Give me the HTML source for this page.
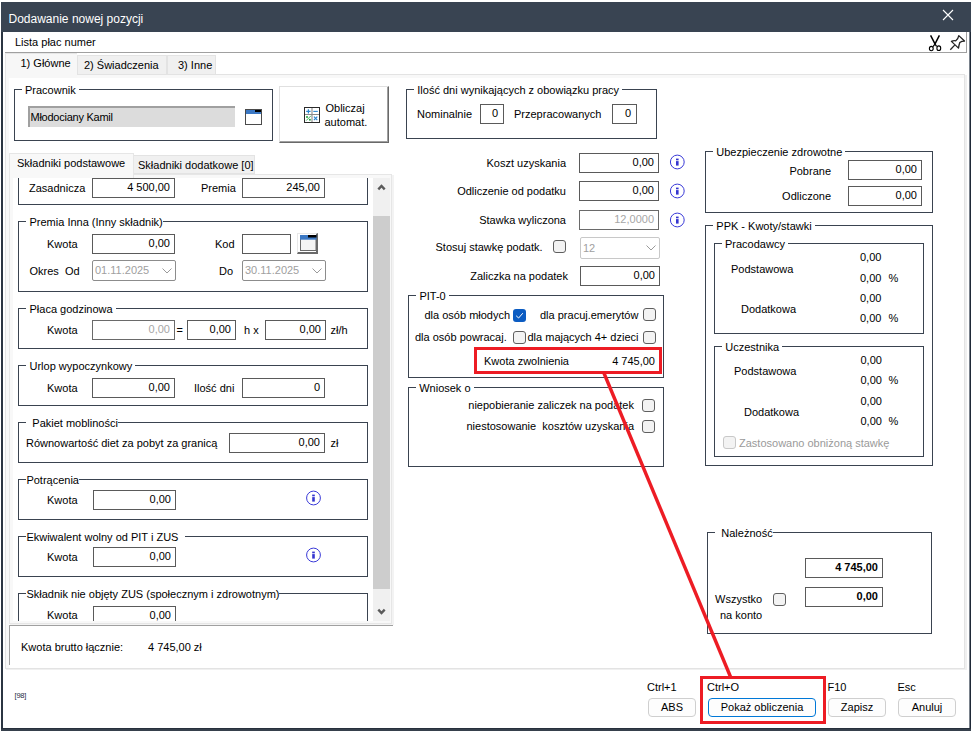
<!DOCTYPE html>
<html><head><meta charset="utf-8"><style>
html,body{margin:0;padding:0;background:#fff;}
body{width:971px;height:731px;overflow:hidden;position:relative;font-family:"Liberation Sans", sans-serif;font-size:11px;color:#000;}
body div{position:absolute;}
</style></head><body>
<div style="left:0px;top:0px;width:971px;height:731px;background:#fff;"></div>
<div style="left:1px;top:2px;width:970px;height:30px;background:#394452;"></div>
<div style="left:1px;top:32px;width:2px;height:699px;background:#2b3542;"></div>
<div style="left:969px;top:32px;width:1px;height:696px;background:#7a828c;"></div>
<div style="left:970px;top:32px;width:1px;height:699px;background:#1f2937;"></div>
<div style="left:1px;top:728px;width:970px;height:3px;background:#36404c;"></div>
<div style="left:1px;top:728px;width:970px;height:1px;background:#27303c;"></div>
<div style="left:8.5px;top:11.84px;font-size:12px;line-height:14px;color:#fff;white-space:pre;">Dodawanie nowej pozycji</div>
<svg style="position:absolute;left:942px;top:9px" width="12" height="12"><path d="M1 1 L11 11 M11 1 L1 11" stroke="#fff" stroke-width="1.1"/></svg>
<div style="left:15px;top:35.69px;font-size:11px;line-height:13px;color:#000;white-space:pre;">Lista płac numer</div>
<div style="left:5px;top:52px;width:962px;height:1px;background:#a0a0a0;"></div>
<div style="left:966px;top:32px;width:1px;height:21px;background:#a0a0a0;"></div>
<svg style="position:absolute;left:925px;top:32px" width="20" height="20"><path d="M5.6 3.4 L10.1 12.2 M14.4 3.4 L9.9 12.2" stroke="#000" stroke-width="1.5" fill="none"/><path d="M10 12.2 L8 14.6 M10 12.2 L11.6 14.4" stroke="#000" stroke-width="1.3"/><ellipse cx="6.3" cy="16.6" rx="1.9" ry="2.2" stroke="#000" stroke-width="1.1" fill="none"/><ellipse cx="13.8" cy="16.2" rx="1.9" ry="2.3" stroke="#000" stroke-width="1.1" fill="none"/></svg>
<svg style="position:absolute;left:947px;top:32px" width="20" height="20"><path d="M3.3 17.8 L7.7 13.1" stroke="#222" stroke-width="1.3"/><path d="M4.4 9.4 C6 8.6 7.6 8.6 8.8 8.8 C10.5 7.6 11.4 5.6 11.8 3.6 L17.5 9 C15.6 9 14.2 9.4 12.8 10.6 C12.2 12.2 11.8 14.2 11.5 16.1 Z" stroke="#222" stroke-width="1.3" fill="#fff" stroke-linejoin="round"/></svg>
<div style="left:5px;top:74px;width:960px;height:595px;background:#f8f8f8;border:1px solid #e3e3e3;box-sizing:border-box;"></div>
<div style="left:965px;top:75px;width:2px;height:595px;background:#f0f0f0;"></div>
<div style="left:6px;top:669px;width:961px;height:1px;background:#f0f0f0;"></div>
<div style="left:9px;top:78px;width:955px;height:590px;background:#fff;"></div>
<div style="left:77px;top:55px;width:90px;height:20px;background:#f0f0f0;border:1px solid #e3e3e3;box-sizing:border-box;"></div>
<div style="left:167px;top:55px;width:49px;height:20px;background:#f0f0f0;border:1px solid #e3e3e3;box-sizing:border-box;"></div>
<div style="left:5px;top:53px;width:72px;height:25px;background:#f7f7f7;border:1px solid #e6e6e6;border-bottom:none;border-right:none;box-sizing:border-box;"></div>
<div style="left:20.5px;top:56.69px;font-size:11px;line-height:13px;color:#000;white-space:pre;">1) Główne</div>
<div style="left:84px;top:58.69px;font-size:11px;line-height:13px;color:#000;white-space:pre;">2) Świadczenia</div>
<div style="left:178px;top:58.69px;font-size:11px;line-height:13px;color:#000;white-space:pre;">3) Inne</div>
<div style="left:14px;top:89px;width:259px;height:52px;border:1px solid #3a4350;box-sizing:border-box;"></div>
<div style="left:22px;top:83px;height:12px;padding:0 3px 0 3px;background:#fff;font-size:11px;line-height:13px;white-space:pre;color:transparent">Pracownik</div>
<div style="left:25px;top:83.69px;font-size:11px;line-height:13px;color:#000;white-space:pre;">Pracownik</div>
<div style="left:28px;top:106px;width:207px;height:21px;background:#dcdcdc;border-top:2px solid #a0a0a0;border-left:2px solid #a0a0a0;box-sizing:border-box;"></div>
<div style="left:30.5px;top:110.69px;font-size:11px;line-height:13px;color:#000;white-space:pre;letter-spacing:-0.25px;">Młodociany Kamil</div>
<svg style="position:absolute;left:245px;top:109px" width="17" height="16"><rect x="0.5" y="0.5" width="16" height="15" fill="#fff" stroke="#4a4a4a" stroke-width="1"/><rect x="1" y="1" width="15" height="4" fill="#3b78c4"/><rect x="10" y="1" width="6" height="2" fill="#000"/></svg>
<div style="left:279px;top:86px;width:110px;height:57px;background:#fff;border:1px solid #e0e0e0;border-right:1px solid #696969;border-bottom:1px solid #696969;box-shadow:inset -1px -1px 0 #a0a0a0;box-sizing:border-box;"></div>
<svg style="position:absolute;left:304px;top:107px" width="16" height="16"><rect x="0.5" y="0.5" width="15" height="15" fill="#fff" stroke="#2a2a2a" stroke-width="1"/><path d="M8 1 V15 M1 7.5 H15" stroke="#8a8a8a" stroke-width="1.1"/><path d="M2.2 4.4 H6.6 M4.4 2.2 V6.6" stroke="#2a86d0" stroke-width="1.2"/><path d="M9.3 4.4 H13.8" stroke="#2a86d0" stroke-width="1.1"/><circle cx="3" cy="9.9" r="1" fill="#1ea03c"/><circle cx="5.9" cy="12.7" r="1" fill="#1ea03c"/><path d="M2.2 13.6 L6.9 8.8" stroke="#1ea03c" stroke-width="0.8"/><path d="M9.9 9.7 L13.3 13.1 M13.3 9.7 L9.9 13.1" stroke="#2a86d0" stroke-width="1.2"/></svg>
<div style="left:325.5px;top:102.19px;font-size:11px;line-height:13px;color:#000;white-space:pre;">Obliczaj</div>
<div style="left:324.5px;top:115.69px;font-size:11px;line-height:13px;color:#000;white-space:pre;">automat.</div>
<div style="left:9px;top:174px;width:383px;height:450px;background:#f8f8f8;border:1px solid #e6e6e6;box-sizing:border-box;"></div>
<div style="left:392px;top:175px;width:2px;height:450px;background:#f3f3f3;"></div>
<div style="left:10px;top:624px;width:384px;height:1px;background:#f3f3f3;"></div>
<div style="left:133px;top:155px;width:122px;height:19px;background:#f0f0f0;border:1px solid #e3e3e3;box-sizing:border-box;"></div>
<div style="left:9px;top:153px;width:125px;height:25px;background:#f8f8f8;border:1px solid #e6e6e6;border-bottom:none;box-sizing:border-box;"></div>
<div style="left:17px;top:156.69px;font-size:11px;line-height:13px;color:#000;white-space:pre;">Składniki podstawowe</div>
<div style="left:138px;top:158.69px;font-size:11px;line-height:13px;color:#000;white-space:pre;">Składniki dodatkowe [0]</div>
<div style="left:13px;top:178px;width:360px;height:443px;background:#fff;overflow:hidden">
<div style="left:-13px;top:-178px;width:971px;height:731px;">
<div style="left:18px;top:160px;width:350px;height:45px;border:1px solid #3a4350;box-sizing:border-box;"></div>
<div style="left:29px;top:181.69px;font-size:11px;line-height:13px;color:#000;white-space:pre;">Zasadnicza</div>
<div style="left:92px;top:178px;width:83px;height:20px;border:1px solid #5a5a5a;box-sizing:border-box;background:#fff;"></div>
<div style="left:-130px;top:181.19px;width:300px;text-align:right;font-size:11px;line-height:13px;color:#000;white-space:pre;">4 500,00</div>
<div style="left:201px;top:181.69px;font-size:11px;line-height:13px;color:#000;white-space:pre;">Premia</div>
<div style="left:242px;top:178px;width:83px;height:20px;border:1px solid #5a5a5a;box-sizing:border-box;background:#fff;"></div>
<div style="left:20px;top:181.19px;width:300px;text-align:right;font-size:11px;line-height:13px;color:#000;white-space:pre;">245,00</div>
<div style="left:18px;top:221px;width:350px;height:71px;border:1px solid #3a4350;box-sizing:border-box;"></div>
<div style="left:25.9px;top:215px;height:12px;padding:0 0px 0 3.6px;background:#fff;font-size:11px;line-height:13px;white-space:pre;color:transparent">Premia Inna (Inny składnik)</div>
<div style="left:29.5px;top:215.69px;font-size:11px;line-height:13px;color:#000;white-space:pre;">Premia Inna (Inny składnik)</div>
<div style="left:47px;top:237.69px;font-size:11px;line-height:13px;color:#000;white-space:pre;">Kwota</div>
<div style="left:92px;top:234px;width:83px;height:20px;border:1px solid #5a5a5a;box-sizing:border-box;background:#fff;"></div>
<div style="left:-130px;top:237.19px;width:300px;text-align:right;font-size:11px;line-height:13px;color:#000;white-space:pre;">0,00</div>
<div style="left:215px;top:237.69px;font-size:11px;line-height:13px;color:#000;white-space:pre;">Kod</div>
<div style="left:242px;top:234px;width:49px;height:20px;border:1px solid #5a5a5a;box-sizing:border-box;background:#fff;"></div>
<div style="left:297px;top:233px;width:21px;height:21px;background:#fff;border:1px solid #e8e8e8;border-right:2px solid #6a6a6a;border-bottom:2px solid #6a6a6a;box-sizing:border-box;"></div>
<svg style="position:absolute;left:300px;top:235px" width="17" height="16"><rect x="0.5" y="0.5" width="15.5" height="15" fill="#f4f4f4" stroke="#6a6a6a" stroke-width="1"/><rect x="0" y="0" width="16.5" height="4.7" fill="#3b78c4"/><rect x="8" y="0" width="8.5" height="2.5" fill="#000"/></svg>
<div style="left:29.5px;top:264.69px;font-size:11px;line-height:13px;color:#000;white-space:pre;">Okres  Od</div>
<div style="left:92px;top:260px;width:84px;height:21px;border:1px solid #8c8c8c;border-radius:2px;box-sizing:border-box;background:#fff;"></div>
<div style="left:95px;top:264.19px;font-size:11px;line-height:13px;color:#a0a0a0;white-space:pre;">01.11.2025</div>
<svg style="position:absolute;left:162px;top:267.5px" width="10" height="6"><path d="M0.5 0.5 L5 5 L9.5 0.5" stroke="#9a9a9a" stroke-width="1" fill="none"/></svg>
<div style="left:219px;top:264.69px;font-size:11px;line-height:13px;color:#000;white-space:pre;">Do</div>
<div style="left:242px;top:260px;width:84px;height:21px;border:1px solid #8c8c8c;border-radius:2px;box-sizing:border-box;background:#fff;"></div>
<div style="left:245px;top:264.19px;font-size:11px;line-height:13px;color:#a0a0a0;white-space:pre;">30.11.2025</div>
<svg style="position:absolute;left:312px;top:267.5px" width="10" height="6"><path d="M0.5 0.5 L5 5 L9.5 0.5" stroke="#9a9a9a" stroke-width="1" fill="none"/></svg>
<div style="left:18px;top:308px;width:350px;height:41px;border:1px solid #3a4350;box-sizing:border-box;"></div>
<div style="left:25.9px;top:302px;height:12px;padding:0 3px 0 3.6px;background:#fff;font-size:11px;line-height:13px;white-space:pre;color:transparent">Płaca godzinowa</div>
<div style="left:29.5px;top:302.69px;font-size:11px;line-height:13px;color:#000;white-space:pre;">Płaca godzinowa</div>
<div style="left:47px;top:323.69px;font-size:11px;line-height:13px;color:#000;white-space:pre;">Kwota</div>
<div style="left:92px;top:320px;width:83px;height:20px;border:1px solid #6a6a6a;box-sizing:border-box;background:#fff;"></div>
<div style="left:-130px;top:323.19px;width:300px;text-align:right;font-size:11px;line-height:13px;color:#a6a6a6;white-space:pre;">0,00</div>
<div style="left:176.5px;top:323.69px;font-size:11px;line-height:13px;color:#000;white-space:pre;">=</div>
<div style="left:187px;top:320px;width:49px;height:20px;border:1px solid #5a5a5a;box-sizing:border-box;background:#fff;"></div>
<div style="left:-69px;top:323.19px;width:300px;text-align:right;font-size:11px;line-height:13px;color:#000;white-space:pre;">0,00</div>
<div style="left:244px;top:323.69px;font-size:11px;line-height:13px;color:#000;white-space:pre;">h x</div>
<div style="left:265px;top:320px;width:61px;height:20px;border:1px solid #5a5a5a;box-sizing:border-box;background:#fff;"></div>
<div style="left:21px;top:323.19px;width:300px;text-align:right;font-size:11px;line-height:13px;color:#000;white-space:pre;">0,00</div>
<div style="left:330.5px;top:323.69px;font-size:11px;line-height:13px;color:#000;white-space:pre;">zł/h</div>
<div style="left:18px;top:365px;width:350px;height:41px;border:1px solid #3a4350;box-sizing:border-box;"></div>
<div style="left:25.9px;top:359px;height:12px;padding:0 3px 0 3.6px;background:#fff;font-size:11px;line-height:13px;white-space:pre;color:transparent">Urlop wypoczynkowy</div>
<div style="left:29.5px;top:359.69px;font-size:11px;line-height:13px;color:#000;white-space:pre;">Urlop wypoczynkowy</div>
<div style="left:47px;top:381.69px;font-size:11px;line-height:13px;color:#000;white-space:pre;">Kwota</div>
<div style="left:92px;top:378px;width:83px;height:20px;border:1px solid #5a5a5a;box-sizing:border-box;background:#fff;"></div>
<div style="left:-130px;top:381.19px;width:300px;text-align:right;font-size:11px;line-height:13px;color:#000;white-space:pre;">0,00</div>
<div style="left:194px;top:381.69px;font-size:11px;line-height:13px;color:#000;white-space:pre;">Ilość dni</div>
<div style="left:242px;top:378px;width:83px;height:20px;border:1px solid #5a5a5a;box-sizing:border-box;background:#fff;"></div>
<div style="left:20px;top:381.19px;width:300px;text-align:right;font-size:11px;line-height:13px;color:#000;white-space:pre;">0</div>
<div style="left:18px;top:422px;width:350px;height:41px;border:1px solid #3a4350;box-sizing:border-box;"></div>
<div style="left:26.299999999999997px;top:416px;height:12px;padding:0 0px 0 6px;background:#fff;font-size:11px;line-height:13px;white-space:pre;color:transparent">Pakiet mobliności</div>
<div style="left:32.3px;top:416.69px;font-size:11px;line-height:13px;color:#000;white-space:pre;">Pakiet mobliności</div>
<div style="left:26px;top:436.69px;font-size:11px;line-height:13px;color:#000;white-space:pre;">Równowartość diet za pobyt za granicą</div>
<div style="left:229px;top:433px;width:96px;height:20px;border:1px solid #5a5a5a;box-sizing:border-box;background:#fff;"></div>
<div style="left:20px;top:436.19px;width:300px;text-align:right;font-size:11px;line-height:13px;color:#000;white-space:pre;">0,00</div>
<div style="left:330.5px;top:436.69px;font-size:11px;line-height:13px;color:#000;white-space:pre;">zł</div>
<div style="left:18px;top:479px;width:350px;height:41px;border:1px solid #3a4350;box-sizing:border-box;"></div>
<div style="left:26.4px;top:473px;height:12px;padding:0 0px 0 0px;background:#fff;font-size:11px;line-height:13px;white-space:pre;color:transparent">Potrącenia</div>
<div style="left:26.4px;top:473.69px;font-size:11px;line-height:13px;color:#000;white-space:pre;">Potrącenia</div>
<div style="left:47px;top:493.69px;font-size:11px;line-height:13px;color:#000;white-space:pre;">Kwota</div>
<div style="left:93px;top:490px;width:83px;height:20px;border:1px solid #5a5a5a;box-sizing:border-box;background:#fff;"></div>
<div style="left:-129px;top:493.19px;width:300px;text-align:right;font-size:11px;line-height:13px;color:#000;white-space:pre;">0,00</div>
<svg style="position:absolute;left:305px;top:490px" width="17" height="17"><g transform="translate(0.50,0.00)"><circle cx="8" cy="8" r="6.9" stroke="#3a3ad8" stroke-width="1" fill="none"/><rect x="6.7" y="4.6" width="2.6" height="1.7" fill="#3535d0"/><rect x="6.7" y="7.1" width="2.6" height="4.5" fill="#3535d0"/></g></svg>
<div style="left:18px;top:536px;width:350px;height:41px;border:1px solid #3a4350;box-sizing:border-box;"></div>
<div style="left:26.4px;top:530px;height:12px;padding:0 7px 0 0px;background:#fff;font-size:11px;line-height:13px;white-space:pre;color:transparent">Ekwiwalent wolny od PIT i ZUS</div>
<div style="left:26.4px;top:530.69px;font-size:11px;line-height:13px;color:#000;white-space:pre;">Ekwiwalent wolny od PIT i ZUS</div>
<div style="left:47px;top:550.69px;font-size:11px;line-height:13px;color:#000;white-space:pre;">Kwota</div>
<div style="left:93px;top:547px;width:83px;height:20px;border:1px solid #5a5a5a;box-sizing:border-box;background:#fff;"></div>
<div style="left:-129px;top:550.19px;width:300px;text-align:right;font-size:11px;line-height:13px;color:#000;white-space:pre;">0,00</div>
<svg style="position:absolute;left:305px;top:547px" width="17" height="17"><g transform="translate(0.50,0.00)"><circle cx="8" cy="8" r="6.9" stroke="#3a3ad8" stroke-width="1" fill="none"/><rect x="6.7" y="4.6" width="2.6" height="1.7" fill="#3535d0"/><rect x="6.7" y="7.1" width="2.6" height="4.5" fill="#3535d0"/></g></svg>
<div style="left:18px;top:593px;width:350px;height:60px;border:1px solid #3a4350;box-sizing:border-box;"></div>
<div style="left:26.4px;top:587px;height:12px;padding:0 0px 0 0px;background:#fff;font-size:11px;line-height:13px;white-space:pre;color:transparent">Składnik nie objęty ZUS (społecznym i zdrowotnym)</div>
<div style="left:26.4px;top:587.69px;font-size:11px;line-height:13px;color:#000;white-space:pre;">Składnik nie objęty ZUS (społecznym i zdrowotnym)</div>
<div style="left:47px;top:608.69px;font-size:11px;line-height:13px;color:#000;white-space:pre;">Kwota</div>
<div style="left:93px;top:606px;width:83px;height:20px;border:1px solid #5a5a5a;box-sizing:border-box;background:#fff;"></div>
<div style="left:-129px;top:609.19px;width:300px;text-align:right;font-size:11px;line-height:13px;color:#000;white-space:pre;">0,00</div>
</div></div>
<div style="left:373px;top:178px;width:17px;height:443px;background:#f0f0f0;"></div>
<div style="left:373px;top:216px;width:17px;height:373px;background:#cdcdcd;"></div>
<svg style="position:absolute;left:377px;top:183px" width="10" height="8"><path d="M1.3 6.4 L4.5 3 L7.7 6.4" stroke="#5a5a5a" stroke-width="2.4" fill="none"/></svg>
<svg style="position:absolute;left:377px;top:608px" width="10" height="8"><path d="M1.3 1.6 L4.5 5 L7.7 1.6" stroke="#5a5a5a" stroke-width="2.4" fill="none"/></svg>
<div style="left:9px;top:625px;width:384px;height:1px;background:#a0a0a0;"></div>
<div style="left:9px;top:625px;width:1px;height:40px;background:#a0a0a0;"></div>
<div style="left:21px;top:640.69px;font-size:11px;line-height:13px;color:#000;white-space:pre;">Kwota brutto łącznie:</div>
<div style="left:148px;top:640.69px;font-size:11px;line-height:13px;color:#000;white-space:pre;">4 745,00 zł</div>
<div style="left:406px;top:89px;width:251px;height:50px;border:1px solid #3a4350;box-sizing:border-box;"></div>
<div style="left:414.3px;top:83px;height:12px;padding:0 3px 0 3px;background:#fff;font-size:11px;line-height:13px;white-space:pre;color:transparent">Ilość dni wynikających z obowiązku pracy</div>
<div style="left:417.3px;top:83.69px;font-size:11px;line-height:13px;color:#000;white-space:pre;">Ilość dni wynikających z obowiązku pracy</div>
<div style="left:417px;top:107.69px;font-size:11px;line-height:13px;color:#000;white-space:pre;">Nominalnie</div>
<div style="left:480px;top:104px;width:24px;height:20px;border:1px solid #5a5a5a;box-sizing:border-box;background:#fff;"></div>
<div style="left:198px;top:107.19px;width:300px;text-align:right;font-size:11px;line-height:13px;color:#000;white-space:pre;">0</div>
<div style="left:514px;top:107.69px;font-size:11px;line-height:13px;color:#000;white-space:pre;">Przepracowanych</div>
<div style="left:612px;top:104px;width:25px;height:20px;border:1px solid #5a5a5a;box-sizing:border-box;background:#fff;"></div>
<div style="left:331px;top:107.19px;width:300px;text-align:right;font-size:11px;line-height:13px;color:#000;white-space:pre;">0</div>
<div style="left:266px;top:156.69px;width:300px;text-align:right;font-size:11px;line-height:13px;color:#000;white-space:pre;">Koszt uzyskania</div>
<div style="left:579px;top:153px;width:80px;height:20px;border:1px solid #5a5a5a;box-sizing:border-box;background:#fff;"></div>
<div style="left:354px;top:156.19px;width:300px;text-align:right;font-size:11px;line-height:13px;color:#000;white-space:pre;">0,00</div>
<svg style="position:absolute;left:669px;top:154px" width="17" height="17"><g transform="translate(0.30,0.00)"><circle cx="8" cy="8" r="6.9" stroke="#3a3ad8" stroke-width="1" fill="none"/><rect x="6.7" y="4.6" width="2.6" height="1.7" fill="#3535d0"/><rect x="6.7" y="7.1" width="2.6" height="4.5" fill="#3535d0"/></g></svg>
<div style="left:266px;top:184.69px;width:300px;text-align:right;font-size:11px;line-height:13px;color:#000;white-space:pre;">Odliczenie od podatku</div>
<div style="left:579px;top:181px;width:80px;height:20px;border:1px solid #5a5a5a;box-sizing:border-box;background:#fff;"></div>
<div style="left:354px;top:184.19px;width:300px;text-align:right;font-size:11px;line-height:13px;color:#000;white-space:pre;">0,00</div>
<svg style="position:absolute;left:669px;top:183px" width="17" height="17"><g transform="translate(0.30,0.00)"><circle cx="8" cy="8" r="6.9" stroke="#3a3ad8" stroke-width="1" fill="none"/><rect x="6.7" y="4.6" width="2.6" height="1.7" fill="#3535d0"/><rect x="6.7" y="7.1" width="2.6" height="4.5" fill="#3535d0"/></g></svg>
<div style="left:266px;top:213.69px;width:300px;text-align:right;font-size:11px;line-height:13px;color:#000;white-space:pre;">Stawka wyliczona</div>
<div style="left:579px;top:210px;width:80px;height:20px;border:1px solid #6a6a6a;box-sizing:border-box;background:#fff;"></div>
<div style="left:354px;top:213.19px;width:300px;text-align:right;font-size:11px;line-height:13px;color:#a6a6a6;white-space:pre;">12,0000</div>
<svg style="position:absolute;left:669px;top:212px" width="17" height="17"><g transform="translate(0.30,0.00)"><circle cx="8" cy="8" r="6.9" stroke="#3a3ad8" stroke-width="1" fill="none"/><rect x="6.7" y="4.6" width="2.6" height="1.7" fill="#3535d0"/><rect x="6.7" y="7.1" width="2.6" height="4.5" fill="#3535d0"/></g></svg>
<div style="left:435.5px;top:240.69px;font-size:11px;line-height:13px;color:#000;white-space:pre;">Stosuj stawkę podatk.</div>
<div style="left:553px;top:240px;width:13px;height:13px;box-sizing:border-box;border:1px solid #5f5f5f;border-radius:3px;background:#f3f3f3;"></div>
<div style="left:580px;top:237px;width:80px;height:22px;border:1px solid #c8c8c8;border-radius:2px;box-sizing:border-box;background:#fff;"></div>
<div style="left:583px;top:242.19px;font-size:11px;line-height:13px;color:#a0a0a0;white-space:pre;">12</div>
<svg style="position:absolute;left:646px;top:245.0px" width="10" height="6"><path d="M0.5 0.5 L5 5 L9.5 0.5" stroke="#9a9a9a" stroke-width="1" fill="none"/></svg>
<div style="left:268px;top:269.69px;width:300px;text-align:right;font-size:11px;line-height:13px;color:#000;white-space:pre;">Zaliczka na podatek</div>
<div style="left:580px;top:266px;width:80px;height:20px;border:1px solid #5a5a5a;box-sizing:border-box;background:#fff;"></div>
<div style="left:355px;top:269.19px;width:300px;text-align:right;font-size:11px;line-height:13px;color:#000;white-space:pre;">0,00</div>
<div style="left:408px;top:295px;width:256px;height:83px;border:1px solid #3a4350;box-sizing:border-box;"></div>
<div style="left:416.4px;top:289px;height:12px;padding:0 3px 0 3px;background:#fff;font-size:11px;line-height:13px;white-space:pre;color:transparent">PIT-0</div>
<div style="left:419.4px;top:289.69px;font-size:11px;line-height:13px;color:#000;white-space:pre;">PIT-0</div>
<div style="left:424.5px;top:308.69px;font-size:11px;line-height:13px;color:#000;white-space:pre;">dla osób młodych</div>
<div style="left:513px;top:309px;width:13px;height:13px;border-radius:3px;background:#0b5cc2;"></div>
<svg style="position:absolute;left:513px;top:309px" width="13" height="13"><path d="M3.2 6.8 L5.6 9 L9.8 4.2" stroke="#fff" stroke-width="1" fill="none"/></svg>
<div style="left:540px;top:308.69px;font-size:11px;line-height:13px;color:#000;white-space:pre;">dla pracuj.emerytów</div>
<div style="left:643px;top:308px;width:13px;height:13px;box-sizing:border-box;border:1px solid #5f5f5f;border-radius:3px;background:#f3f3f3;"></div>
<div style="left:415px;top:330.69px;font-size:11px;line-height:13px;color:#000;white-space:pre;">dla osób powracaj.</div>
<div style="left:513px;top:331px;width:13px;height:13px;box-sizing:border-box;border:1px solid #5f5f5f;border-radius:3px;background:#f3f3f3;"></div>
<div style="left:527.5px;top:330.69px;font-size:11px;line-height:13px;color:#000;white-space:pre;">dla mających 4+ dzieci</div>
<div style="left:643px;top:331px;width:13px;height:13px;box-sizing:border-box;border:1px solid #5f5f5f;border-radius:3px;background:#f3f3f3;"></div>
<div style="left:484px;top:354.69px;font-size:11px;line-height:13px;color:#000;white-space:pre;">Kwota zwolnienia</div>
<div style="left:355px;top:354.69px;width:300px;text-align:right;font-size:11px;line-height:13px;color:#000;white-space:pre;">4 745,00</div>
<div style="left:408px;top:387px;width:256px;height:80px;border:1px solid #3a4350;box-sizing:border-box;"></div>
<div style="left:416.2px;top:381px;height:12px;padding:0 3px 0 3px;background:#fff;font-size:11px;line-height:13px;white-space:pre;color:transparent">Wniosek o</div>
<div style="left:419.2px;top:381.69px;font-size:11px;line-height:13px;color:#000;white-space:pre;">Wniosek o</div>
<div style="left:334px;top:398.69px;width:300px;text-align:right;font-size:11px;line-height:13px;color:#000;white-space:pre;">niepobieranie zaliczek na podatek</div>
<div style="left:642px;top:399px;width:13px;height:13px;box-sizing:border-box;border:1px solid #5f5f5f;border-radius:3px;background:#f3f3f3;"></div>
<div style="left:334px;top:419.69px;width:300px;text-align:right;font-size:11px;line-height:13px;color:#000;white-space:pre;">niestosowanie  kosztów uzyskania</div>
<div style="left:642px;top:420px;width:13px;height:13px;box-sizing:border-box;border:1px solid #5f5f5f;border-radius:3px;background:#f3f3f3;"></div>
<div style="left:705px;top:151px;width:228px;height:62px;border:1px solid #3a4350;box-sizing:border-box;"></div>
<div style="left:713.3px;top:145px;height:12px;padding:0 3px 0 3px;background:#fff;font-size:11px;line-height:13px;white-space:pre;color:transparent">Ubezpieczenie zdrowotne</div>
<div style="left:716.3px;top:145.69px;font-size:11px;line-height:13px;color:#000;white-space:pre;">Ubezpieczenie zdrowotne</div>
<div style="left:531px;top:165.19px;width:300px;text-align:right;font-size:11px;line-height:13px;color:#000;white-space:pre;">Pobrane</div>
<div style="left:848px;top:160px;width:74px;height:20px;border:1px solid #5a5a5a;box-sizing:border-box;background:#fff;"></div>
<div style="left:617px;top:163.19px;width:300px;text-align:right;font-size:11px;line-height:13px;color:#000;white-space:pre;">0,00</div>
<div style="left:531px;top:190.19px;width:300px;text-align:right;font-size:11px;line-height:13px;color:#000;white-space:pre;">Odliczone</div>
<div style="left:848px;top:186px;width:74px;height:20px;border:1px solid #5a5a5a;box-sizing:border-box;background:#fff;"></div>
<div style="left:617px;top:189.19px;width:300px;text-align:right;font-size:11px;line-height:13px;color:#000;white-space:pre;">0,00</div>
<div style="left:705px;top:225px;width:228px;height:241px;border:1px solid #3a4350;box-sizing:border-box;"></div>
<div style="left:713.3px;top:219px;height:12px;padding:0 3px 0 3px;background:#fff;font-size:11px;line-height:13px;white-space:pre;color:transparent">PPK - Kwoty/stawki</div>
<div style="left:716.3px;top:219.69px;font-size:11px;line-height:13px;color:#000;white-space:pre;">PPK - Kwoty/stawki</div>
<div style="left:714px;top:243px;width:210px;height:91px;border:1px solid #3a4350;box-sizing:border-box;"></div>
<div style="left:722px;top:237px;height:12px;padding:0 3px 0 3px;background:#fff;font-size:11px;line-height:13px;white-space:pre;color:transparent">Pracodawcy</div>
<div style="left:725px;top:237.69px;font-size:11px;line-height:13px;color:#000;white-space:pre;">Pracodawcy</div>
<div style="left:731px;top:262.69px;font-size:11px;line-height:13px;color:#000;white-space:pre;">Podstawowa</div>
<div style="left:741px;top:302.69px;font-size:11px;line-height:13px;color:#000;white-space:pre;">Dodatkowa</div>
<div style="left:860px;top:251.19px;font-size:11px;line-height:13px;color:#000;white-space:pre;">0,00</div>
<div style="left:860px;top:271.69px;font-size:11px;line-height:13px;color:#000;white-space:pre;">0,00</div>
<div style="left:860px;top:291.69px;font-size:11px;line-height:13px;color:#000;white-space:pre;">0,00</div>
<div style="left:860px;top:312.19px;font-size:11px;line-height:13px;color:#000;white-space:pre;">0,00</div>
<div style="left:888.5px;top:271.69px;font-size:11px;line-height:13px;color:#000;white-space:pre;">%</div>
<div style="left:888.5px;top:312.19px;font-size:11px;line-height:13px;color:#000;white-space:pre;">%</div>
<div style="left:714px;top:346px;width:210px;height:111px;border:1px solid #3a4350;box-sizing:border-box;"></div>
<div style="left:722.3px;top:340px;height:12px;padding:0 3px 0 3px;background:#fff;font-size:11px;line-height:13px;white-space:pre;color:transparent">Uczestnika</div>
<div style="left:725.3px;top:340.69px;font-size:11px;line-height:13px;color:#000;white-space:pre;">Uczestnika</div>
<div style="left:734px;top:364.69px;font-size:11px;line-height:13px;color:#000;white-space:pre;">Podstawowa</div>
<div style="left:744px;top:405.69px;font-size:11px;line-height:13px;color:#000;white-space:pre;">Dodatkowa</div>
<div style="left:860.5px;top:353.69px;font-size:11px;line-height:13px;color:#000;white-space:pre;">0,00</div>
<div style="left:860.5px;top:374.19px;font-size:11px;line-height:13px;color:#000;white-space:pre;">0,00</div>
<div style="left:860.5px;top:394.69px;font-size:11px;line-height:13px;color:#000;white-space:pre;">0,00</div>
<div style="left:860.5px;top:414.69px;font-size:11px;line-height:13px;color:#000;white-space:pre;">0,00</div>
<div style="left:888.5px;top:374.19px;font-size:11px;line-height:13px;color:#000;white-space:pre;">%</div>
<div style="left:888.5px;top:414.69px;font-size:11px;line-height:13px;color:#000;white-space:pre;">%</div>
<div style="left:723px;top:436px;width:13px;height:13px;box-sizing:border-box;border:1px solid #c8c8c8;border-radius:3px;background:#f3f3f3;"></div>
<div style="left:739px;top:436.69px;font-size:11px;line-height:13px;color:#9a9a9a;white-space:pre;">Zastosowano obniżoną stawkę</div>
<div style="left:707px;top:532px;width:225px;height:102px;border:1px solid #3a4350;box-sizing:border-box;"></div>
<div style="left:714.8px;top:526px;height:12px;padding:0 0px 0 6.5px;background:#fff;font-size:11px;line-height:13px;white-space:pre;color:transparent">Należność</div>
<div style="left:721.3px;top:526.69px;font-size:11px;line-height:13px;color:#000;white-space:pre;">Należność</div>
<div style="left:805px;top:558px;width:78px;height:20px;border:1px solid #5a5a5a;box-sizing:border-box;background:#fff;"></div>
<div style="left:578px;top:561.19px;width:300px;text-align:right;font-size:11px;line-height:13px;color:#000;white-space:pre;font-weight:bold;">4 745,00</div>
<div style="left:715px;top:593.19px;font-size:11px;line-height:13px;color:#000;white-space:pre;">Wszystko</div>
<div style="left:720px;top:609.19px;font-size:11px;line-height:13px;color:#000;white-space:pre;">na konto</div>
<div style="left:773px;top:593px;width:13px;height:13px;box-sizing:border-box;border:1px solid #5f5f5f;border-radius:3px;background:#f3f3f3;"></div>
<div style="left:805px;top:587px;width:78px;height:20px;border:1px solid #5a5a5a;box-sizing:border-box;background:#fff;"></div>
<div style="left:578px;top:590.19px;width:300px;text-align:right;font-size:11px;line-height:13px;color:#000;white-space:pre;font-weight:bold;">0,00</div>
<div style="left:14.5px;top:690.90px;font-size:7.5px;line-height:9px;color:#1e2a44;white-space:pre;letter-spacing:-0.2px;">[98]</div>
<div style="left:647px;top:680.69px;font-size:11px;line-height:13px;color:#000;white-space:pre;">Ctrl+1</div>
<div style="left:648px;top:698px;width:48px;height:19px;border:1px solid #cfcfcf;border-radius:4px;box-sizing:border-box;background:#fdfdfd;"></div>
<div style="left:648px;top:698px;width:48px;height:19px;text-align:center;font-size:11px;line-height:19px;">ABS</div>
<div style="left:707px;top:680.69px;font-size:11px;line-height:13px;color:#000;white-space:pre;">Ctrl+O</div>
<div style="left:708px;top:698px;width:108px;height:19px;border:1px solid #0078d7;border-radius:4px;box-sizing:border-box;background:#fdfdfd;"></div>
<div style="left:708px;top:698px;width:108px;height:19px;text-align:center;font-size:11px;line-height:19px;">Pokaż obliczenia</div>
<div style="left:827.5px;top:680.69px;font-size:11px;line-height:13px;color:#000;white-space:pre;">F10</div>
<div style="left:828px;top:698px;width:58px;height:19px;border:1px solid #cfcfcf;border-radius:4px;box-sizing:border-box;background:#fdfdfd;"></div>
<div style="left:828px;top:698px;width:58px;height:19px;text-align:center;font-size:11px;line-height:19px;">Zapisz</div>
<div style="left:897.5px;top:680.69px;font-size:11px;line-height:13px;color:#000;white-space:pre;">Esc</div>
<div style="left:898px;top:698px;width:58px;height:19px;border:1px solid #cfcfcf;border-radius:4px;box-sizing:border-box;background:#fdfdfd;"></div>
<div style="left:898px;top:698px;width:58px;height:19px;text-align:center;font-size:11px;line-height:19px;">Anuluj</div>
<div style="left:474px;top:347px;width:188px;height:27px;border:3px solid #ed1c24;box-sizing:border-box;"></div>
<div style="left:700px;top:676px;width:126px;height:48px;border:3px solid #ed1c24;box-sizing:border-box;"></div>
<svg style="position:absolute;left:0;top:0" width="971" height="731"><path d="M603.5 372 L730.8 677.5" stroke="#ed1c24" stroke-width="3.4"/></svg>
</body></html>
